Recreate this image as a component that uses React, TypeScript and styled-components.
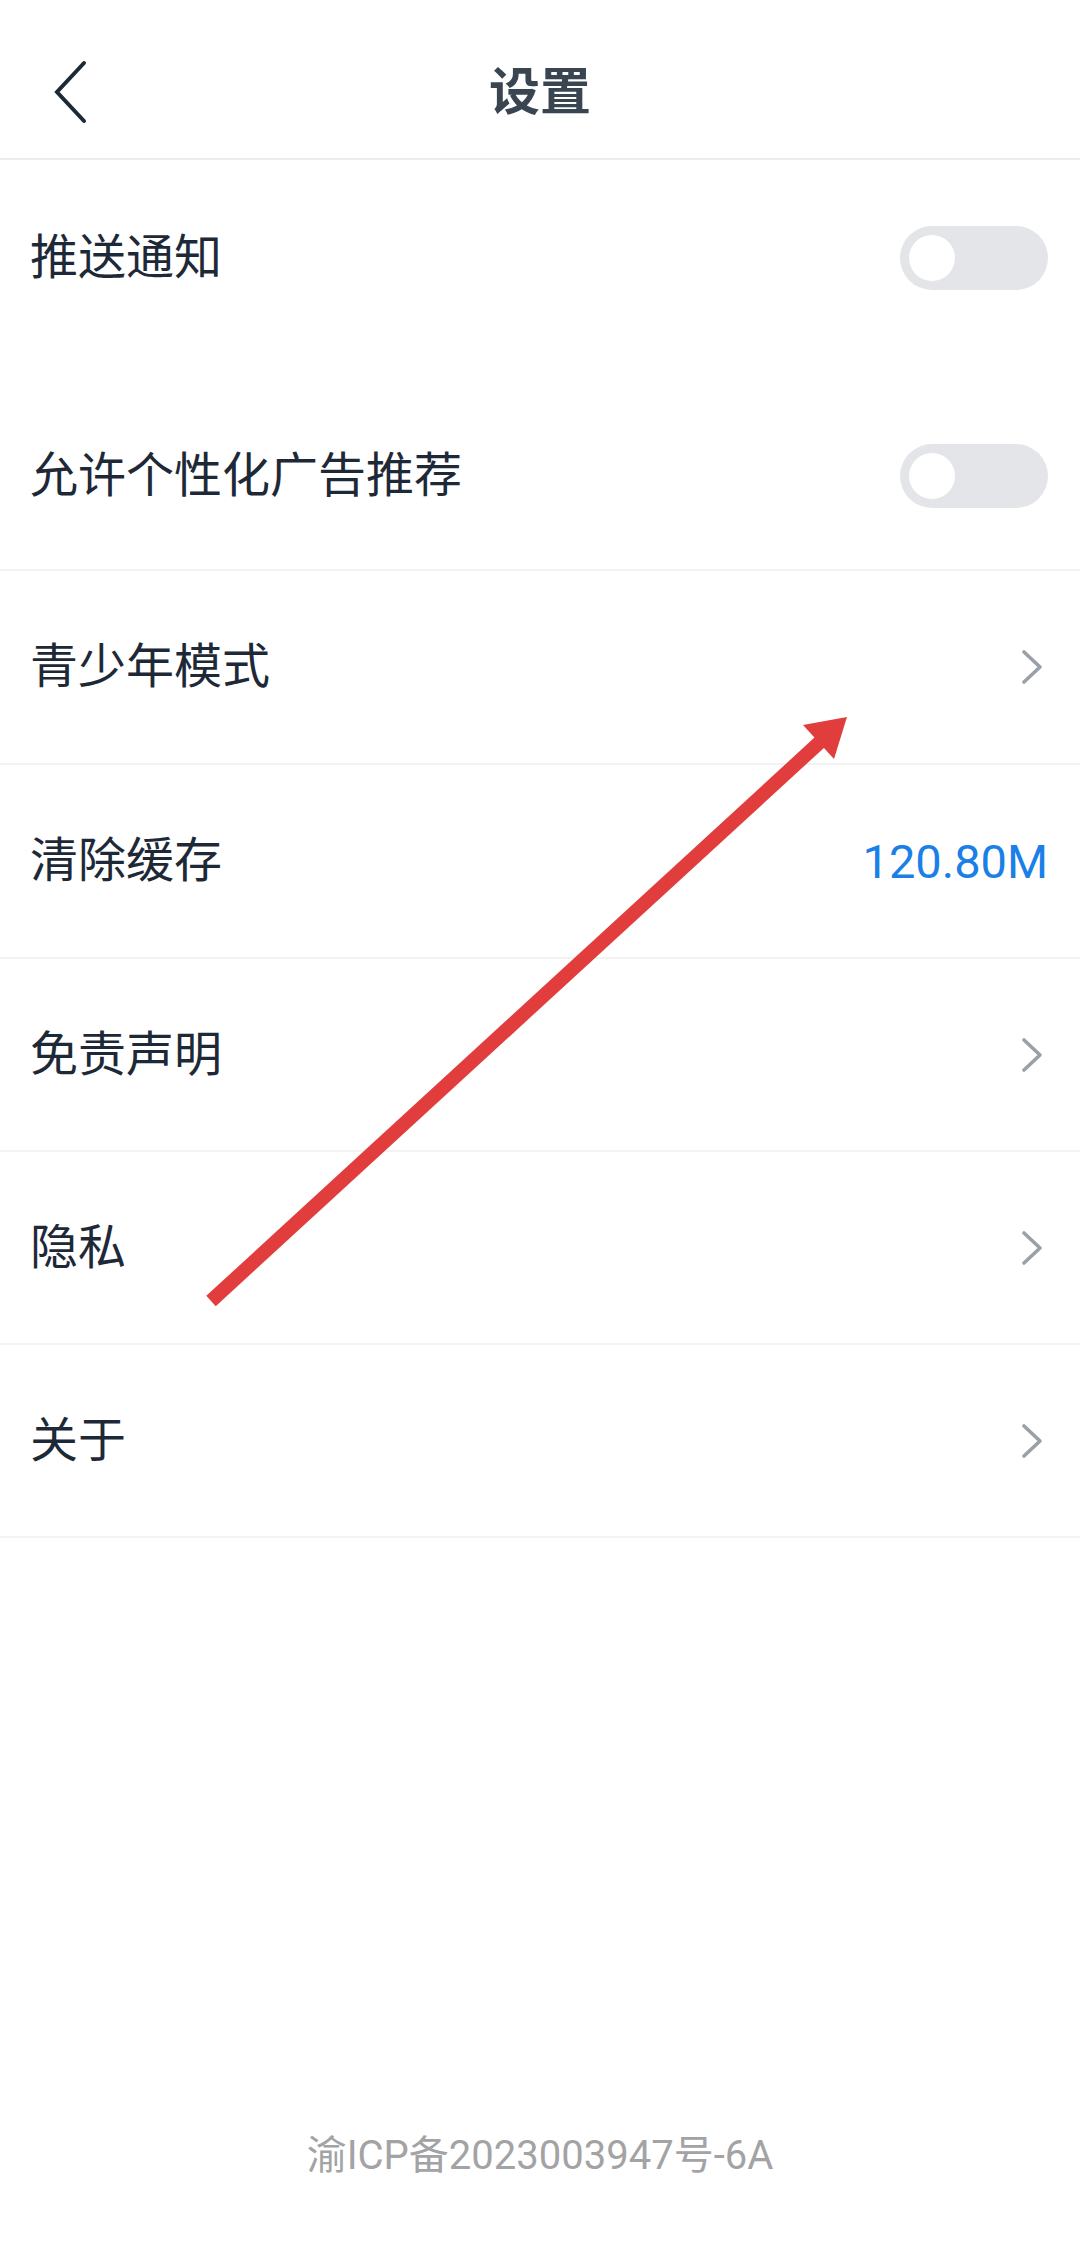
import React from 'react';
import styled, { createGlobalStyle } from 'styled-components';

const GlobalStyle = createGlobalStyle`
  * {
    box-sizing: border-box;
  }

  body {
    margin: 0;
    background: #ffffff;
    font-family: Roboto, 'Noto Sans CJK SC', sans-serif;
  }
`;

const Page = styled.div`
  position: relative;
  width: 1080px;
  min-height: 2252px;
  display: flex;
  flex-direction: column;
  background: #ffffff;
`;

const Header = styled.header`
  height: 160px;
  padding-top: 26px;
  display: grid;
  grid-template-columns: 160px 1fr 160px;
  align-items: center;
  border-bottom: 2px solid #ececec;
`;

const BackButton = styled.div`
  display: flex;
  align-items: center;
  padding-left: 52px;
`;

const Title = styled.h1`
  margin: 0;
  text-align: center;
  font-size: 51px;
  font-weight: 700;
  color: #3a4552;
  line-height: 1;
`;

const List = styled.div`
  display: flex;
  flex-direction: column;
`;

interface RowProps {
  height: number;
  offset?: number;
  divider?: boolean;
}

const Row = styled.div<RowProps>`
  height: ${(p) => p.height}px;
  padding: ${(p) => p.offset || 0}px 32px 0 30px;
  display: flex;
  align-items: center;
  justify-content: space-between;
  border-bottom: ${(p) => (p.divider ? '2px solid #f3f3f3' : 'none')};
`;

const Label = styled.span`
  font-size: 48px;
  color: #1e2937;
  line-height: 1;
`;

const Value = styled.span`
  font-size: 47px;
  color: #1a7fe6;
  line-height: 1;
`;

const Toggle = styled.div`
  width: 148px;
  height: 64px;
  border-radius: 32px;
  background: #e4e5e8;
  display: flex;
  align-items: center;
  padding: 0 9px;
`;

const Knob = styled.div`
  width: 46px;
  height: 46px;
  border-radius: 50%;
  background: #ffffff;
`;

const Footer = styled.footer`
  margin-top: auto;
  padding-bottom: 76px;
  text-align: center;
  font-size: 40px;
  color: #a3a3a5;
  line-height: 1;
`;

const Overlay = styled.svg`
  position: absolute;
  top: 0;
  left: 0;
  pointer-events: none;
`;

const Chevron = () => (
  <svg width='30' height='36' viewBox='0 0 30 36'>
    <path
      d='M6 3 L22 18 L6 33'
      fill='none'
      stroke='#9aa0a8'
      strokeWidth='3.6'
      strokeLinecap='round'
      strokeLinejoin='round'
    />
  </svg>
);

const BackIcon = () => (
  <svg width='36' height='64' viewBox='0 0 36 64'>
    <path
      d='M32 3 L5 32 L32 61'
      fill='none'
      stroke='#1e2937'
      strokeWidth='4'
      strokeLinecap='round'
      strokeLinejoin='miter'
    />
  </svg>
);

const links = ['免责声明', '隐私', '关于'];

const App: React.FC = () => {
  return (
    <Page>
      <GlobalStyle />
      <Header>
        <BackButton>
          <BackIcon />
        </BackButton>
        <Title>设置</Title>
        <div />
      </Header>
      <List>
        <Row height={196}>
          <Label>推送通知</Label>
          <Toggle>
            <Knob />
          </Toggle>
        </Row>
        <Row height={215} offset={27} divider>
          <Label>允许个性化广告推荐</Label>
          <Toggle>
            <Knob />
          </Toggle>
        </Row>
        <Row height={194} divider>
          <Label>青少年模式</Label>
          <Chevron />
        </Row>
        <Row height={194} divider>
          <Label>清除缓存</Label>
          <Value>120.80M</Value>
        </Row>
        {links.map((text) => (
          <Row key={text} height={193} divider>
            <Label>{text}</Label>
            <Chevron />
          </Row>
        ))}
      </List>
      <Footer>渝ICP备2023003947号-6A</Footer>
      <Overlay width='1080' height='2252' viewBox='0 0 1080 2252'>
        <line
          x1='211'
          y1='1301'
          x2='820'
          y2='742'
          stroke='#e23d3d'
          strokeWidth='14'
        />
        <polygon points='847,717 834,759 803,725' fill='#e23d3d' />
      </Overlay>
    </Page>
  );
};

export default App;
